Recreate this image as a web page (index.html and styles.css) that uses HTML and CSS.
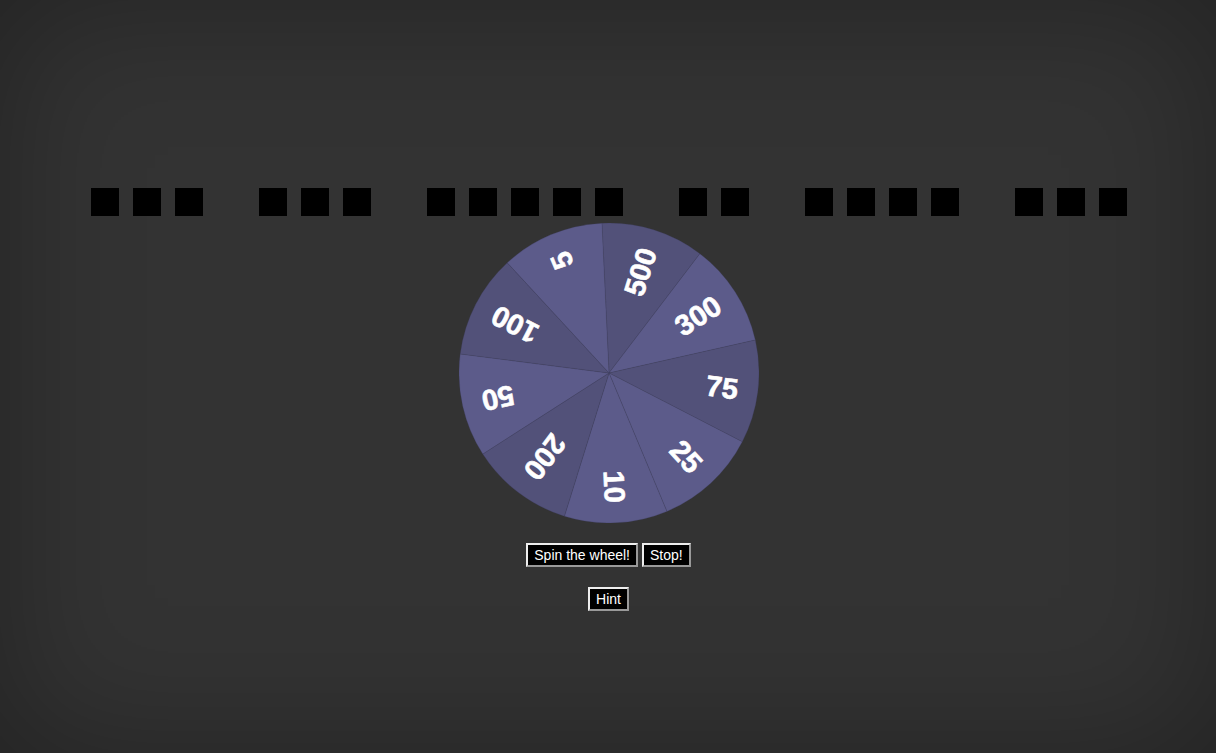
FILE: index.html
```html
<!DOCTYPE html>
<html>
<head>
<meta charset="utf-8">
<title>Wheel of Fortune</title>
<link rel="stylesheet" href="styles.css">
</head>
<body>
<div class="board">
  <div class="tile"></div><div class="tile"></div><div class="tile"></div>
  <div class="tile space"></div>
  <div class="tile"></div><div class="tile"></div><div class="tile"></div>
  <div class="tile space"></div>
  <div class="tile"></div><div class="tile"></div><div class="tile"></div><div class="tile"></div><div class="tile"></div>
  <div class="tile space"></div>
  <div class="tile"></div><div class="tile"></div>
  <div class="tile space"></div>
  <div class="tile"></div><div class="tile"></div><div class="tile"></div><div class="tile"></div>
  <div class="tile space"></div>
  <div class="tile"></div><div class="tile"></div><div class="tile"></div>
</div>
<svg class="wheel" viewBox="-150 -150 300 300" width="300" height="300">
  <g class="segs">
    <path class="dark" d="M0 0 L-7.07 -149.83 A150 150 0 0 1 90.90 -119.33 Z"/>
    <path class="light" d="M0 0 L90.90 -119.33 A150 150 0 0 1 146.33 -32.98 Z"/>
    <path class="dark" d="M0 0 L146.33 -32.98 A150 150 0 0 1 133.29 68.79 Z"/>
    <path class="light" d="M0 0 L133.29 68.79 A150 150 0 0 1 57.89 138.38 Z"/>
    <path class="light" d="M0 0 L57.89 138.38 A150 150 0 0 1 -44.61 143.22 Z"/>
    <path class="dark" d="M0 0 L-44.61 143.22 A150 150 0 0 1 -126.23 81.03 Z"/>
    <path class="light" d="M0 0 L-126.23 81.03 A150 150 0 0 1 -148.79 -19.06 Z"/>
    <path class="dark" d="M0 0 L-148.79 -19.06 A150 150 0 0 1 -101.73 -110.23 Z"/>
    <path class="light" d="M0 0 L-101.73 -110.23 A150 150 0 0 1 -7.07 -149.83 Z"/>
  </g>
  <g class="nums">
    <text transform="rotate(-72.7)" x="130" y="10">500</text>
    <text transform="rotate(-32.7)" x="130" y="10">300</text>
    <text transform="rotate(7.3)" x="130" y="10">75</text>
    <text transform="rotate(47.3)" x="130" y="10">25</text>
    <text transform="rotate(87.3)" x="130" y="10">10</text>
    <text transform="rotate(127.3)" x="130" y="10">200</text>
    <text transform="rotate(167.3)" x="130" y="10">50</text>
    <text transform="rotate(207.3)" x="130" y="10">100</text>
    <text transform="rotate(247.3)" x="130" y="10">5</text>
  </g>
</svg>
<div class="controls">
  <button class="btn">Spin the wheel!</button><button class="btn">Stop!</button>
</div>
<div class="controls">
  <button class="btn">Hint</button>
</div>
</body>
</html>
```
FILE: styles.css
```css
html {
  height: 100%;
  background: #333333;
}
body {
  margin: 0;
  min-height: 100vh;
  box-sizing: border-box;
  padding-top: 181px;
  box-shadow: inset 0 0 140px rgba(0, 0, 0, 0.32);
  font-family: "Liberation Sans", Arial, sans-serif;
}
.board {
  display: flex;
  justify-content: center;
  padding-left: 1px;
}
.tile {
  width: 28px;
  height: 28px;
  margin: 7px;
  background: #000;
  flex: none;
}
.tile.space {
  background: transparent;
}
.wheel {
  display: block;
  margin: 0 auto;
  position: relative;
  left: 1px;
}
.segs path {
  stroke: rgba(60, 60, 95, 0.6);
  stroke-width: 0.4;
}
.light {
  fill: #5c5b8a;
}
.dark {
  fill: #525179;
}
.nums text {
  fill: #fff;
  stroke: #fff;
  stroke-width: 0.6;
  font-family: "Liberation Sans", Arial, sans-serif;
  font-weight: bold;
  font-size: 29px;
  text-anchor: end;
}
.controls {
  display: flex;
  justify-content: center;
  gap: 4px;
  margin-top: 20px;
  padding-left: 1px;
}
.btn {
  font-family: "Liberation Sans", Arial, sans-serif;
  font-size: 14px;
  line-height: 16px;
  color: #fff;
  background: #000;
  padding: 2px 6px;
  margin: 0;
  border: 2px solid;
  border-color: #eeeeee #9a9a9a #9a9a9a #eeeeee;
  border-radius: 0;
}
```
